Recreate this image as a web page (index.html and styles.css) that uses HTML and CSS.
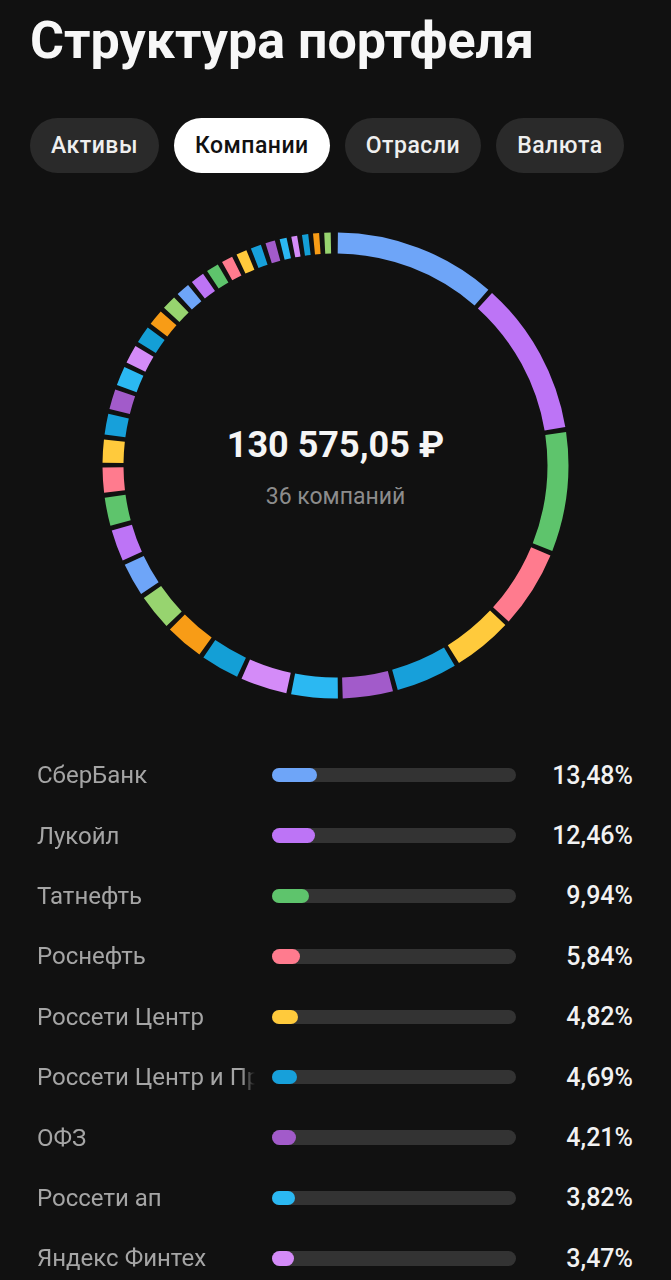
FILE: index.html
```html
<!DOCTYPE html>
<html lang="ru">
<head>
<meta charset="utf-8">
<title>Структура портфеля</title>
<link rel="stylesheet" href="styles.css">
</head>
<body>
<main class="screen">
  <h1 class="title">Структура портфеля</h1>

  <nav class="tabs">
    <button class="tab">Активы</button>
    <button class="tab tab-active">Компании</button>
    <button class="tab">Отрасли</button>
    <button class="tab">Валюта</button>
  </nav>

  <section class="chart">
    <svg class="donut" viewBox="0 0 467 467" width="467" height="467">
      <g transform="rotate(-90 233.5 233.5)" fill="none" stroke-width="21">
        <circle cx="233.5" cy="233.5" r="222.5" pathLength="360" stroke="#6ea5f8" stroke-dasharray="40.4 360" stroke-dashoffset="-0.6"/>
        <circle cx="233.5" cy="233.5" r="222.5" pathLength="360" stroke="#bd74f6" stroke-dasharray="38.3 360" stroke-dashoffset="-42.2"/>
        <circle cx="233.5" cy="233.5" r="222.5" pathLength="360" stroke="#5ec46c" stroke-dasharray="29.8 360" stroke-dashoffset="-81.7"/>
        <circle cx="233.5" cy="233.5" r="222.5" pathLength="360" stroke="#ff7b8e" stroke-dasharray="19.3 360" stroke-dashoffset="-112.7"/>
        <circle cx="233.5" cy="233.5" r="222.5" pathLength="360" stroke="#ffca3c" stroke-dasharray="14.8 360" stroke-dashoffset="-133.2"/>
        <circle cx="233.5" cy="233.5" r="222.5" pathLength="360" stroke="#17a0da" stroke-dasharray="15.3 360" stroke-dashoffset="-149.2"/>
        <circle cx="233.5" cy="233.5" r="222.5" pathLength="360" stroke="#a25bca" stroke-dasharray="12.5 360" stroke-dashoffset="-165.7"/>
        <circle cx="233.5" cy="233.5" r="222.5" pathLength="360" stroke="#2bb8f2" stroke-dasharray="11.6 360" stroke-dashoffset="-179.4"/>
        <circle cx="233.5" cy="233.5" r="222.5" pathLength="360" stroke="#d48bf8" stroke-dasharray="11.6 360" stroke-dashoffset="-192.2"/>
        <circle cx="233.5" cy="233.5" r="222.5" pathLength="360" stroke="#149fd6" stroke-dasharray="9.55 360" stroke-dashoffset="-205"/>
        <circle cx="233.5" cy="233.5" r="222.5" pathLength="360" stroke="#f89c16" stroke-dasharray="9.55 360" stroke-dashoffset="-215.75"/>
        <circle cx="233.5" cy="233.5" r="222.5" pathLength="360" stroke="#97d46f" stroke-dasharray="8.85 360" stroke-dashoffset="-226.5"/>
        <circle cx="233.5" cy="233.5" r="222.5" pathLength="360" stroke="#6ea5f8" stroke-dasharray="8.2 360" stroke-dashoffset="-236.55"/>
        <circle cx="233.5" cy="233.5" r="222.5" pathLength="360" stroke="#bd74f6" stroke-dasharray="7.85 360" stroke-dashoffset="-245.95"/>
        <circle cx="233.5" cy="233.5" r="222.5" pathLength="360" stroke="#5ec46c" stroke-dasharray="7.05 360" stroke-dashoffset="-255"/>
        <circle cx="233.5" cy="233.5" r="222.5" pathLength="360" stroke="#ff7b8e" stroke-dasharray="6.25 360" stroke-dashoffset="-263.25"/>
        <circle cx="233.5" cy="233.5" r="222.5" pathLength="360" stroke="#ffca3c" stroke-dasharray="5.75 360" stroke-dashoffset="-270.7"/>
        <circle cx="233.5" cy="233.5" r="222.5" pathLength="360" stroke="#17a0da" stroke-dasharray="5.2 360" stroke-dashoffset="-277.65"/>
        <circle cx="233.5" cy="233.5" r="222.5" pathLength="360" stroke="#a25bca" stroke-dasharray="5 360" stroke-dashoffset="-284.05"/>
        <circle cx="233.5" cy="233.5" r="222.5" pathLength="360" stroke="#2bb8f2" stroke-dasharray="4.8 360" stroke-dashoffset="-290.25"/>
        <circle cx="233.5" cy="233.5" r="222.5" pathLength="360" stroke="#d48bf8" stroke-dasharray="4.6 360" stroke-dashoffset="-296.25"/>
        <circle cx="233.5" cy="233.5" r="222.5" pathLength="360" stroke="#149fd6" stroke-dasharray="4.25 360" stroke-dashoffset="-302.05"/>
        <circle cx="233.5" cy="233.5" r="222.5" pathLength="360" stroke="#f89c16" stroke-dasharray="3.9 360" stroke-dashoffset="-307.5"/>
        <circle cx="233.5" cy="233.5" r="222.5" pathLength="360" stroke="#97d46f" stroke-dasharray="3.55 360" stroke-dashoffset="-312.6"/>
        <circle cx="233.5" cy="233.5" r="222.5" pathLength="360" stroke="#6ea5f8" stroke-dasharray="3.4 360" stroke-dashoffset="-317.35"/>
        <circle cx="233.5" cy="233.5" r="222.5" pathLength="360" stroke="#bd74f6" stroke-dasharray="3.4 360" stroke-dashoffset="-321.95"/>
        <circle cx="233.5" cy="233.5" r="222.5" pathLength="360" stroke="#5ec46c" stroke-dasharray="3.1 360" stroke-dashoffset="-326.55"/>
        <circle cx="233.5" cy="233.5" r="222.5" pathLength="360" stroke="#ff7b8e" stroke-dasharray="2.8 360" stroke-dashoffset="-330.85"/>
        <circle cx="233.5" cy="233.5" r="222.5" pathLength="360" stroke="#ffca3c" stroke-dasharray="2.65 360" stroke-dashoffset="-334.85"/>
        <circle cx="233.5" cy="233.5" r="222.5" pathLength="360" stroke="#17a0da" stroke-dasharray="2.6 360" stroke-dashoffset="-338.7"/>
        <circle cx="233.5" cy="233.5" r="222.5" pathLength="360" stroke="#a25bca" stroke-dasharray="2.4 360" stroke-dashoffset="-342.5"/>
        <circle cx="233.5" cy="233.5" r="222.5" pathLength="360" stroke="#2bb8f2" stroke-dasharray="1.75 360" stroke-dashoffset="-346.1"/>
        <circle cx="233.5" cy="233.5" r="222.5" pathLength="360" stroke="#d48bf8" stroke-dasharray="1.45 360" stroke-dashoffset="-349.05"/>
        <circle cx="233.5" cy="233.5" r="222.5" pathLength="360" stroke="#149fd6" stroke-dasharray="1.55 360" stroke-dashoffset="-351.7"/>
        <circle cx="233.5" cy="233.5" r="222.5" pathLength="360" stroke="#f89c16" stroke-dasharray="1.5 360" stroke-dashoffset="-354.45"/>
        <circle cx="233.5" cy="233.5" r="222.5" pathLength="360" stroke="#97d46f" stroke-dasharray="1.6 360" stroke-dashoffset="-357.2"/>
      </g>
    </svg>
    <div class="chart-center">
      <div class="total">130 575,05 ₽</div>
      <div class="count">36 компаний</div>
    </div>
  </section>

  <ul class="list">
    <li class="row"><span class="name">СберБанк</span><span class="track"><span class="fill c-blue" style="--p:13.48"></span></span><span class="pct">13,48%</span></li>
    <li class="row"><span class="name">Лукойл</span><span class="track"><span class="fill c-purple" style="--p:12.46"></span></span><span class="pct">12,46%</span></li>
    <li class="row"><span class="name">Татнефть</span><span class="track"><span class="fill c-green" style="--p:9.94"></span></span><span class="pct">9,94%</span></li>
    <li class="row"><span class="name">Роснефть</span><span class="track"><span class="fill c-pink" style="--p:5.84"></span></span><span class="pct">5,84%</span></li>
    <li class="row"><span class="name">Россети Центр</span><span class="track"><span class="fill c-yellow" style="--p:4.82"></span></span><span class="pct">4,82%</span></li>
    <li class="row"><span class="name">Россети Центр и Приволжье</span><span class="track"><span class="fill c-teal" style="--p:4.69"></span></span><span class="pct">4,69%</span></li>
    <li class="row"><span class="name">ОФЗ</span><span class="track"><span class="fill c-dpurple" style="--p:4.21"></span></span><span class="pct">4,21%</span></li>
    <li class="row"><span class="name">Россети ап</span><span class="track"><span class="fill c-cyan" style="--p:3.82"></span></span><span class="pct">3,82%</span></li>
    <li class="row"><span class="name">Яндекс Финтех</span><span class="track"><span class="fill c-lilac" style="--p:3.47"></span></span><span class="pct">3,47%</span></li>
  </ul>
</main>
</body>
</html>
```

FILE: styles.css
```css
* { box-sizing: border-box; }

html, body {
  margin: 0;
  padding: 0;
  background: #111111;
}

body {
  font-family: Roboto, "Noto Sans", "Liberation Sans", sans-serif;
  color: #f2f2f2;
  overflow: hidden;
}

.screen {
  width: 671px;
  height: 1280px;
  overflow: hidden;
}

.title {
  margin: 0;
  padding: 11px 30px 0;
  font-size: 52px;
  line-height: 60px;
  font-weight: 700;
  color: #f7f7f7;
  white-space: nowrap;
}

.tabs {
  display: flex;
  gap: 15px;
  padding: 0 30px;
  margin-top: 47px;
}

.tab {
  height: 55px;
  padding: 0 21px;
  border: none;
  border-radius: 28px;
  background: #2a2a2a;
  color: #efefef;
  font-family: inherit;
  font-size: 23px;
  letter-spacing: 0.5px;
  font-weight: 500;
}

.tab-active {
  background: #ffffff;
  color: #111111;
}

.chart {
  display: grid;
  justify-content: center;
  margin-top: 59px;
}

.donut {
  grid-area: 1 / 1;
  display: block;
}

.chart-center {
  grid-area: 1 / 1;
  align-self: center;
  justify-self: center;
  text-align: center;
  padding-top: 3px;
}

.total {
  font-size: 36px;
  line-height: 42px;
  font-weight: 700;
  color: #f5f5f5;
}

.count {
  margin-top: 17px;
  font-size: 23px;
  line-height: 28px;
  color: #8c8c8c;
}

.list {
  list-style: none;
  margin: 46px 0 0;
  padding: 0 38px 0 37px;
}

.row {
  display: grid;
  grid-template-columns: 218px 244px 1fr;
  column-gap: 17px;
  align-items: center;
  height: 60.4px;
}

.name {
  font-size: 24px;
  color: #a5a5a5;
  white-space: nowrap;
  overflow: hidden;
  -webkit-mask-image: linear-gradient(to right, #000 calc(100% - 14px), transparent);
  mask-image: linear-gradient(to right, #000 calc(100% - 14px), transparent);
}

.track {
  display: block;
  height: 14.5px;
  border-radius: 8px;
  background: #333333;
}

.fill {
  display: block;
  height: 100%;
  border-radius: 8px;
  width: calc(14.5px + (100% - 14.5px) * var(--p) / 100);
}

.pct {
  text-align: right;
  font-size: 25px;
  font-weight: 500;
  color: #f2f2f2;
}

.c-blue { background: #6ea5f8; }
.c-purple { background: #bd74f6; }
.c-green { background: #5ec46c; }
.c-pink { background: #ff7b8e; }
.c-yellow { background: #ffca3c; }
.c-teal { background: #17a0da; }
.c-dpurple { background: #a25bca; }
.c-cyan { background: #2bb8f2; }
.c-lilac { background: #d48bf8; }
```
